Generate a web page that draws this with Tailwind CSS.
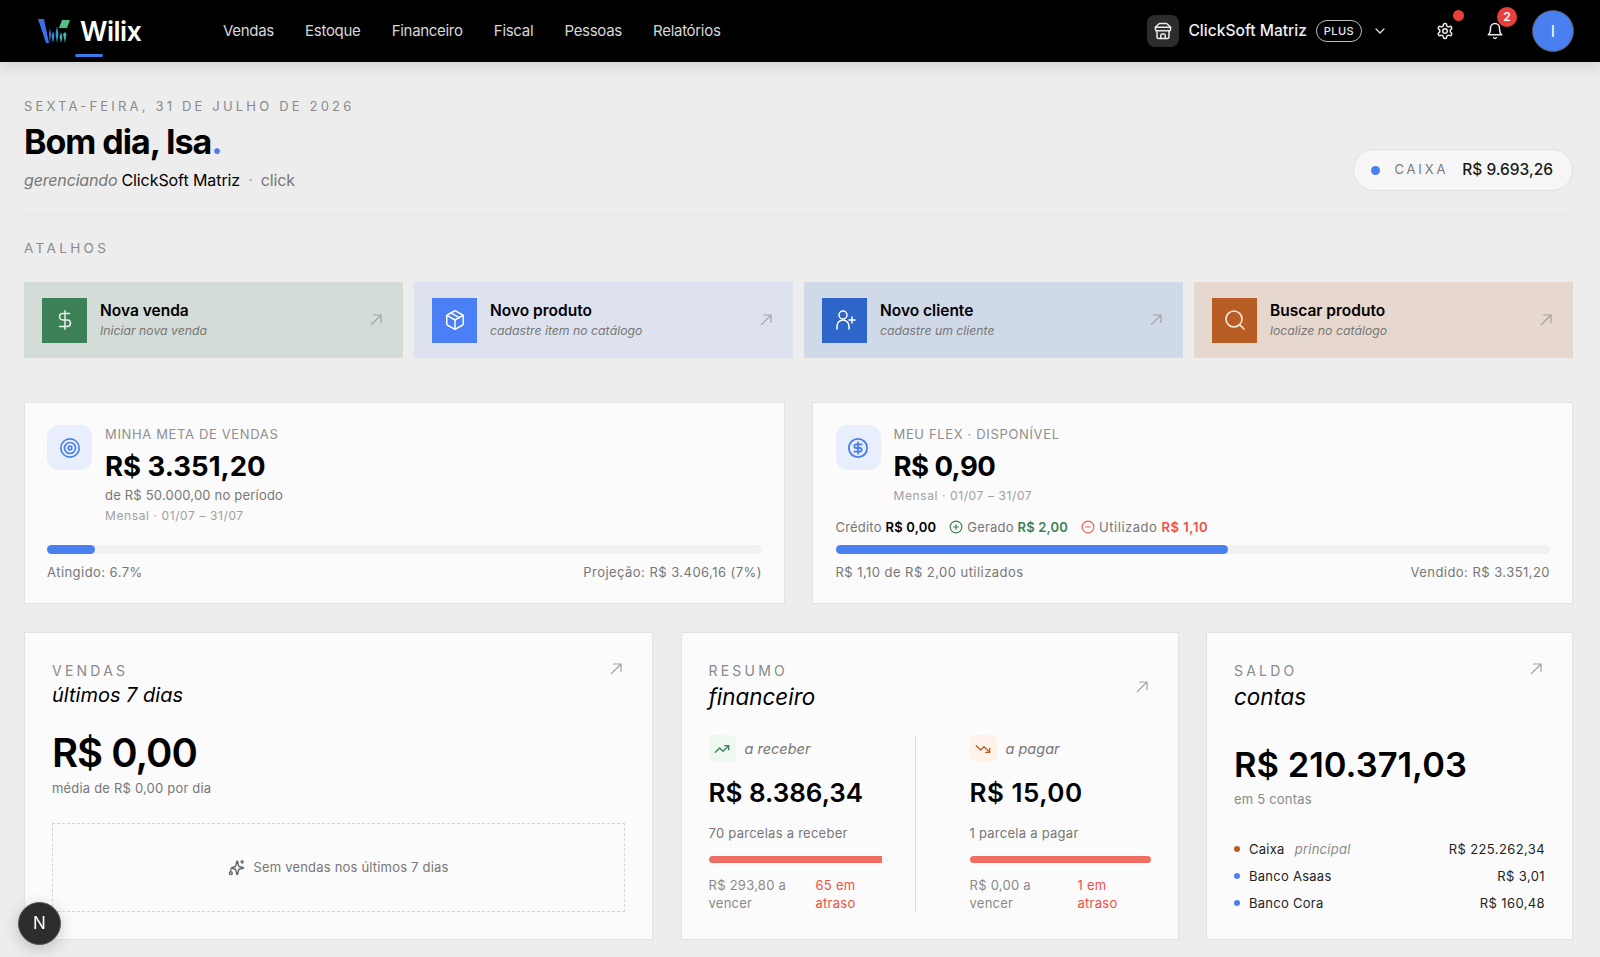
<!DOCTYPE html>
<html lang="pt-BR">

<head>
    <meta charset="UTF-8">
    <meta name="viewport" content="width=device-width, initial-scale=1.0">
    <title>Wilix</title>
    <script src="https://cdn.jsdelivr.net/npm/@tailwindcss/browser@4"></script>
</head>

<body class="bg-[#ededed] h-[957px] overflow-hidden text-black [font-family:Inter,sans-serif]">
    <!-- Top bar -->
    <header class="relative z-10 flex items-center h-[62px] bg-black pl-[38px] pr-[26px] shadow-[0_4px_16px_rgba(0,0,0,0.12)]">
        <div class="relative flex items-center h-full w-[185px]">
            <svg class="w-[32px] h-[26px]" viewBox="0 0 32 26">
                <polygon points="0,1 6,1 11,25 8,25" fill="#3b6fe8" />
                <polygon points="12,10 13,16 12,25 11,16" fill="#3b78e0" />
                <polygon points="15,13 16.5,18 15,25 13.5,18" fill="#3b86d8" />
                <polygon points="19,8 20.5,16 19,25 17.5,16" fill="#3b95cc" />
                <polygon points="23,14 24.5,19 23,25 21.5,19" fill="#3ca5b8" />
                <polygon points="27,14 28.5,16 27,25 25,16" fill="#45b3a8" />
                <polygon points="24,2 32,2 29,10 21,10" fill="#52c088" />
            </svg>
            <span class="ml-[10px] text-[27px] leading-none font-semibold tracking-[-0.02em] text-white">Wilix</span>
            <div class="absolute left-[37px] bottom-[5px] w-[28px] h-[3px] rounded-full bg-[#3b78e8]"></div>
        </div>
        <nav class="flex items-center gap-[31.2px] text-[15px] tracking-[-0.02em] text-[#d8d8d8]">
            <a>Vendas</a>
            <a>Estoque</a>
            <a>Financeiro</a>
            <a>Fiscal</a>
            <a>Pessoas</a>
            <a>Relatórios</a>
        </nav>
        <div class="ml-auto flex items-center">
            <div class="flex items-center justify-center w-[32px] h-[32px] rounded-lg bg-[#2c2c2c]">
                <svg class="w-[18px] h-[18px]" viewBox="0 0 24 24" fill="none" stroke="#ececec" stroke-width="2" stroke-linecap="round" stroke-linejoin="round">
                    <path d="m2 7 4.41-4.41A2 2 0 0 1 7.83 2h8.34a2 2 0 0 1 1.42.59L22 7" />
                    <path d="M4 12v8a2 2 0 0 0 2 2h12a2 2 0 0 0 2-2v-8" />
                    <path d="M15 22v-4a2 2 0 0 0-2-2h-2a2 2 0 0 0-2 2v4" />
                    <path d="M2 7h20" />
                    <path d="M22 7v3a2 2 0 0 1-2 2a2.7 2.7 0 0 1-1.59-.63.7.7 0 0 0-.82 0A2.7 2.7 0 0 1 16 12a2.7 2.7 0 0 1-1.59-.63.7.7 0 0 0-.82 0A2.7 2.7 0 0 1 12 12a2.7 2.7 0 0 1-1.59-.63.7.7 0 0 0-.82 0A2.7 2.7 0 0 1 8 12a2.7 2.7 0 0 1-1.59-.63.7.7 0 0 0-.82 0A2.7 2.7 0 0 1 4 12a2 2 0 0 1-2-2V7" />
                </svg>
            </div>
            <span class="ml-[9px] text-[15.6px] font-medium text-[#eeeeee]">ClickSoft Matriz</span>
            <span class="ml-[9px] flex items-center justify-center w-[46px] h-[22px] rounded-full border border-[#bdbdbd] text-[11px] font-medium tracking-[0.04em] text-[#e8e8e8]">PLUS</span>
            <svg class="ml-[10px] w-[16px] h-[16px]" viewBox="0 0 24 24" fill="none" stroke="#d8d8d8" stroke-width="2" stroke-linecap="round" stroke-linejoin="round">
                <path d="m6 9 6 6 6-6" />
            </svg>
            <div class="relative ml-[48px] w-[18px] h-[18px]">
                <svg class="w-[18px] h-[18px]" viewBox="0 0 24 24" fill="none" stroke="#ececec" stroke-width="2" stroke-linecap="round" stroke-linejoin="round">
                    <path d="M12.22 2h-.44a2 2 0 0 0-2 2v.18a2 2 0 0 1-1 1.73l-.43.25a2 2 0 0 1-2 0l-.15-.08a2 2 0 0 0-2.73.73l-.22.38a2 2 0 0 0 .73 2.73l.15.1a2 2 0 0 1 1 1.72v.51a2 2 0 0 1-1 1.74l-.15.09a2 2 0 0 0-.73 2.73l.22.38a2 2 0 0 0 2.73.73l.15-.08a2 2 0 0 1 2 0l.43.25a2 2 0 0 1 1 1.73V20a2 2 0 0 0 2 2h.44a2 2 0 0 0 2-2v-.18a2 2 0 0 1 1-1.73l.43-.25a2 2 0 0 1 2 0l.15.08a2 2 0 0 0 2.73-.73l.22-.39a2 2 0 0 0-.73-2.73l-.15-.08a2 2 0 0 1-1-1.74v-.5a2 2 0 0 1 1-1.74l.15-.09a2 2 0 0 0 .73-2.73l-.22-.38a2 2 0 0 0-2.73-.73l-.15.08a2 2 0 0 1-2 0l-.43-.25a2 2 0 0 1-1-1.73V4a2 2 0 0 0-2-2z" />
                    <circle cx="12" cy="12" r="3" />
                </svg>
                <span class="absolute -top-[12px] left-[17px] w-[11px] h-[11px] rounded-full bg-[#e83f3f]"></span>
            </div>
            <div class="relative ml-[32px] w-[18px] h-[18px]">
                <svg class="w-[18px] h-[18px]" viewBox="0 0 24 24" fill="none" stroke="#ececec" stroke-width="2" stroke-linecap="round" stroke-linejoin="round">
                    <path d="M6 8a6 6 0 0 1 12 0c0 7 3 9 3 9H3s3-2 3-9" />
                    <path d="M10.3 21a1.94 1.94 0 0 0 3.4 0" />
                </svg>
                <span class="absolute -top-[15px] left-[11px] flex items-center justify-center w-[20px] h-[20px] rounded-full bg-[#e83f3f] text-[12px] font-semibold text-white">2</span>
            </div>
            <div class="ml-[28px] flex items-center justify-center w-[42px] h-[42px] rounded-full border border-[#555] bg-[#4a7ff0] text-[16px] text-white">I</div>
        </div>
    </header>

    <main class="pl-6 pr-[27px] pt-[34px]">
        <!-- Greeting -->
        <div class="flex items-end justify-between pb-[23px] border-b border-[#e5e5e5]">
            <div>
                <p class="text-[13px] leading-[20px] tracking-[0.245em] text-[#8a8a8a]">SEXTA-FEIRA, 31 DE JULHO DE 2026</p>
                <h1 class="mt-[6px] text-[34px] leading-[40px] font-bold tracking-[-0.03em]">Bom dia, Isa<span class="text-[#4a7ff0]">.</span></h1>
                <p class="mt-[7px] flex items-center text-[16px] leading-[22px]"><em class="tracking-[-0.01em] text-[#777]">gerenciando</em><span class="ml-[4px] tracking-[-0.005em]">ClickSoft Matriz</span><span class="mx-[8px] text-[#aaa]">·</span><span class="tracking-[-0.01em] text-[#777]">click</span></p>
            </div>
            <div class="flex items-center h-[42px] pl-[17px] pr-[19px] rounded-full border border-[#e0e0e0] bg-[#f6f6f6]">
                <span class="w-[9px] h-[9px] rounded-full bg-[#4a7ff0]"></span>
                <span class="ml-[14px] text-[13px] tracking-[0.22em] text-[#7a7a7a]">CAIXA</span>
                <span class="ml-[14px] text-[15.5px] font-medium text-[#1a1a1a]">R$ 9.693,26</span>
            </div>
        </div>

        <!-- Shortcuts -->
        <p class="mt-[23px] text-[13.5px] leading-[20px] tracking-[0.25em] text-[#8a8a8a]">ATALHOS</p>
        <div class="mt-[24px] grid grid-cols-4 gap-[11px]">
            <div class="flex items-center h-[76px] pl-[18px] pr-[21px] bg-[#d3dcd6]">
                <div class="flex items-center justify-center w-[45px] h-[45px] bg-[#3c8058]">
                    <svg class="w-[22px] h-[22px]" viewBox="0 0 24 24" fill="none" stroke="#e8f2ec" stroke-width="1.6" stroke-linecap="round" stroke-linejoin="round">
                        <line x1="12" x2="12" y1="2" y2="22" />
                        <path d="M17 5H9.5a3.5 3.5 0 0 0 0 7h5a3.5 3.5 0 0 1 0 7H6" />
                    </svg>
                </div>
                <div class="ml-[13px] mt-[2px]">
                    <p class="text-[15.5px] leading-[20px] font-semibold">Nova venda</p>
                    <p class="text-[12.25px] leading-[20px] italic text-[#777]">Iniciar nova venda</p>
                </div>
                <svg class="ml-auto w-[12px] h-[12px]" viewBox="0 0 12 12" fill="none" stroke="#a3a3a3" stroke-width="1.2">
                    <path d="M1 11 11 1M3 1h8v8" />
                </svg>
            </div>
            <div class="flex items-center h-[76px] pl-[18px] pr-[21px] bg-[#dde2ee]">
                <div class="flex items-center justify-center w-[45px] h-[45px] bg-[#4a7ff5]">
                    <svg class="w-[22px] h-[22px]" viewBox="0 0 24 24" fill="none" stroke="#ffffff" stroke-width="1.6" stroke-linecap="round" stroke-linejoin="round">
                        <path d="m7.5 4.27 9 5.15" />
                        <path d="M21 8a2 2 0 0 0-1-1.73l-7-4a2 2 0 0 0-2 0l-7 4A2 2 0 0 0 3 8v8a2 2 0 0 0 1 1.73l7 4a2 2 0 0 0 2 0l7-4A2 2 0 0 0 21 16Z" />
                        <path d="m3.3 7 8.7 5 8.7-5" />
                        <path d="M12 22V12" />
                    </svg>
                </div>
                <div class="ml-[13px] mt-[2px]">
                    <p class="text-[15.5px] leading-[20px] font-semibold">Novo produto</p>
                    <p class="text-[12.25px] leading-[20px] italic text-[#777]">cadastre item no catálogo</p>
                </div>
                <svg class="ml-auto w-[12px] h-[12px]" viewBox="0 0 12 12" fill="none" stroke="#a3a3a3" stroke-width="1.2">
                    <path d="M1 11 11 1M3 1h8v8" />
                </svg>
            </div>
            <div class="flex items-center h-[76px] pl-[18px] pr-[21px] bg-[#d0d9e7]">
                <div class="flex items-center justify-center w-[45px] h-[45px] bg-[#2d66c8]">
                    <svg class="w-[24px] h-[24px]" viewBox="0 0 24 24" fill="none" stroke="#ffffff" stroke-width="1.5" stroke-linecap="round" stroke-linejoin="round">
                        <path d="M4 21v-3a6 6 0 0 1 12 0v3" />
                        <circle cx="10" cy="7" r="4" />
                        <line x1="19" x2="19" y1="9" y2="15" />
                        <line x1="22" x2="16" y1="12" y2="12" />
                    </svg>
                </div>
                <div class="ml-[13px] mt-[2px]">
                    <p class="text-[15.5px] leading-[20px] font-semibold">Novo cliente</p>
                    <p class="text-[12.25px] leading-[20px] italic text-[#777]">cadastre um cliente</p>
                </div>
                <svg class="ml-auto w-[12px] h-[12px]" viewBox="0 0 12 12" fill="none" stroke="#a3a3a3" stroke-width="1.2">
                    <path d="M1 11 11 1M3 1h8v8" />
                </svg>
            </div>
            <div class="flex items-center h-[76px] pl-[18px] pr-[21px] bg-[#e6d7cf]">
                <div class="flex items-center justify-center w-[45px] h-[45px] bg-[#b85d24]">
                    <svg class="w-[24px] h-[24px]" viewBox="0 0 24 24" fill="none" stroke="#f8e8de" stroke-width="1.6" stroke-linecap="round" stroke-linejoin="round">
                        <circle cx="11" cy="11" r="8" />
                        <path d="m21 21-4.3-4.3" />
                    </svg>
                </div>
                <div class="ml-[13px] mt-[2px]">
                    <p class="text-[15.5px] leading-[20px] font-semibold">Buscar produto</p>
                    <p class="text-[12.25px] leading-[20px] italic text-[#777]">localize no catálogo</p>
                </div>
                <svg class="ml-auto w-[12px] h-[12px]" viewBox="0 0 12 12" fill="none" stroke="#a3a3a3" stroke-width="1.2">
                    <path d="M1 11 11 1M3 1h8v8" />
                </svg>
            </div>
        </div>

        <!-- Goal and flex cards -->
        <div class="mt-[44px] grid grid-cols-2 gap-[27px]">
            <section class="h-[202px] px-[22px] pt-[22px] border border-[#e2e2e2] bg-[#fbfbfb]">
                <div class="flex">
                    <div class="flex items-center justify-center shrink-0 w-[45px] h-[45px] rounded-xl bg-[#e8eefb]">
                        <svg class="w-[22px] h-[22px]" viewBox="0 0 24 24" fill="none" stroke="#4a7ff0" stroke-width="1.8">
                            <circle cx="12" cy="12" r="10" />
                            <circle cx="12" cy="12" r="6" />
                            <circle cx="12" cy="12" r="2" />
                        </svg>
                    </div>
                    <div class="ml-[13px]">
                        <p class="text-[13px] leading-[18px] tracking-[0.05em] text-[#8f8f8f]">MINHA META DE VENDAS</p>
                        <p class="mt-[5px] text-[27.5px] leading-[36px] font-bold">R$ 3.351,20</p>
                        <p class="mt-[2px] text-[13px] leading-[18px] tracking-[0.015em] text-[#777]">de R$ 50.000,00 no período</p>
                        <p class="mt-[4px] text-[12px] leading-[16px] tracking-[0.05em] text-[#a0a0a0]">Mensal · 01/07 – 31/07</p>
                    </div>
                </div>
                <div class="mt-[21px] h-[9px] rounded-full bg-[#f1f1f1]">
                    <div class="h-full rounded-full bg-[#4a7ff0]" style="width: 6.7%"></div>
                </div>
                <div class="mt-[9px] flex justify-between text-[13px] leading-[18px] tracking-[0.035em] text-[#777]">
                    <span>Atingido: 6.7%</span>
                    <span>Projeção: R$ 3.406,16 (7%)</span>
                </div>
            </section>
            <section class="h-[202px] pl-[22.5px] pr-[22px] pt-[22px] border border-[#e2e2e2] bg-[#fbfbfb]">
                <div class="flex">
                    <div class="flex items-center justify-center shrink-0 w-[45px] h-[45px] rounded-xl bg-[#e8eefb]">
                        <svg class="w-[22px] h-[22px]" viewBox="0 0 24 24" fill="none" stroke="#4a7ff0" stroke-width="2" stroke-linecap="round" stroke-linejoin="round">
                            <circle cx="12" cy="12" r="10" />
                            <path d="M16 8h-6a2 2 0 1 0 0 4h4a2 2 0 1 1 0 4H8" />
                            <path d="M12 18V6" />
                        </svg>
                    </div>
                    <div class="ml-[13px]">
                        <p class="text-[13px] leading-[18px] tracking-[0.05em] text-[#8f8f8f]">MEU FLEX · DISPONÍVEL</p>
                        <p class="mt-[5px] text-[27.5px] leading-[36px] font-bold tracking-[-0.02em]">R$ 0,90</p>
                        <p class="mt-[4px] text-[12px] leading-[16px] tracking-[0.05em] text-[#a0a0a0]">Mensal · 01/07 – 31/07</p>
                    </div>
                </div>
                <div class="mt-[14px] flex items-center text-[13px] leading-[18px] tracking-[0.015em] text-[#777]">
                    <span>Crédito <b class="font-semibold text-black">R$ 0,00</b></span>
                    <svg class="ml-[13px] w-[14px] h-[14px]" viewBox="0 0 24 24" fill="none" stroke="#3c8058" stroke-width="2" stroke-linecap="round">
                        <circle cx="12" cy="12" r="10" />
                        <path d="M8 12h8M12 8v8" />
                    </svg>
                    <span class="ml-[4px]">Gerado <b class="font-semibold text-[#3c8058]">R$ 2,00</b></span>
                    <svg class="ml-[13px] w-[14px] h-[14px]" viewBox="0 0 24 24" fill="none" stroke="#ef5f52" stroke-width="2" stroke-linecap="round">
                        <circle cx="12" cy="12" r="10" />
                        <path d="M8 12h8" />
                    </svg>
                    <span class="ml-[4px] tracking-[0.04em]">Utilizado <b class="font-semibold text-[#ef5144]">R$ 1,10</b></span>
                </div>
                <div class="mt-[9px] h-[9px] rounded-full bg-[#f1f1f1]">
                    <div class="h-full rounded-full bg-[#4a7ff0]" style="width: 55%"></div>
                </div>
                <div class="mt-[9px] flex justify-between text-[13px] leading-[18px] tracking-[0.035em] text-[#777]">
                    <span>R$ 1,10 de R$ 2,00 utilizados</span>
                    <span>Vendido: R$ 3.351,20</span>
                </div>
            </section>
        </div>

        <!-- Bottom cards -->
        <div class="mt-[28px] grid grid-cols-[629px_498px_367px] gap-[27.5px]">
            <section class="h-[308px] px-[27px] pt-[29px] border border-[#e2e2e2] bg-[#fbfbfb]">
                <div class="flex justify-between">
                    <div>
                        <p class="text-[14px] leading-[18px] tracking-[0.23em] text-[#8a8a8a]">VENDAS</p>
                        <p class="mt-[2px] text-[20px] leading-[26px] italic">últimos 7 dias</p>
                    </div>
                    <svg class="mr-[3px] mt-[1px] w-[12px] h-[12px]" viewBox="0 0 12 12" fill="none" stroke="#a3a3a3" stroke-width="1.2">
                        <path d="M1 11 11 1M3 1h8v8" />
                    </svg>
                </div>
                <p class="mt-[21px] text-[40px] leading-[48px] font-semibold tracking-[-0.025em]">R$ 0,00</p>
                <p class="mt-[2px] text-[13px] leading-[18px] tracking-[0.015em] text-[#777]">média de R$ 0,00 por dia</p>
                <div class="mt-[26px] flex items-center justify-center h-[89px] border border-dashed border-[#d5d5d5] text-[13px] tracking-[0.015em] text-[#777]">
                    <svg class="mr-[8px] w-[17px] h-[17px]" viewBox="0 0 24 24" fill="none" stroke="#666" stroke-width="2" stroke-linecap="round" stroke-linejoin="round">
                        <path d="M11 15.5a2 2 0 0 0-1.4-1.4l-4-1.1a.5.5 0 0 1 0-1l4-1.1A2 2 0 0 0 11 9.5l1.5-6a.5.5 0 0 1 1 0l1.5 6a2 2 0 0 0 1.4 1.4l5 1.1a.5.5 0 0 1 0 1l-5 1.1a2 2 0 0 0-1.4 1.4l-1.5 6a.5.5 0 0 1-1 0z" />
                        <path d="M20 2v4" />
                        <path d="M22 4h-4" />
                        <circle cx="4" cy="20" r="2" />
                        <path d="M4 14v2" />
                    </svg>
                    Sem vendas nos últimos 7 dias
                </div>
            </section>

            <section class="h-[308px] pl-[27px] pr-[27px] pt-[29px] border border-[#e2e2e2] bg-[#fbfbfb]">
                <div class="flex items-center justify-between">
                    <div>
                        <p class="text-[14px] leading-[18px] tracking-[0.23em] text-[#8a8a8a]">RESUMO</p>
                        <p class="mt-[3px] text-[22.4px] leading-[28px] italic">financeiro</p>
                    </div>
                    <svg class="mr-[3px] w-[12px] h-[12px]" viewBox="0 0 12 12" fill="none" stroke="#a3a3a3" stroke-width="1.2">
                        <path d="M1 11 11 1M3 1h8v8" />
                    </svg>
                </div>
                <div class="mt-[24px] flex">
                    <div class="w-[179px] mr-[27px]">
                        <div class="flex items-center">
                            <div class="flex items-center justify-center w-[27px] h-[27px] rounded-md bg-[#eef7f0]">
                                <svg class="w-[16px] h-[16px]" viewBox="0 0 24 24" fill="none" stroke="#3c8058" stroke-width="2" stroke-linecap="round" stroke-linejoin="round">
                                    <polyline points="22 7 13.5 15.5 8.5 10.5 2 17" />
                                    <polyline points="16 7 22 7 22 13" />
                                </svg>
                            </div>
                            <span class="ml-[9px] text-[14.5px] italic text-[#777]">a receber</span>
                        </div>
                        <p class="mt-[14px] text-[26px] leading-[34px] font-semibold">R$ 8.386,34</p>
                        <p class="mt-[14px] text-[13px] leading-[18px] tracking-[0.02em] text-[#777]">70 parcelas a receber</p>
                        <div class="mt-[14px] h-[7px] rounded-full bg-[#f3f3f3]">
                            <div class="h-full rounded-l-full bg-[#f06f62]" style="width: 97%"></div>
                        </div>
                        <div class="mt-[13px] flex text-[13px] leading-[18px] tracking-[0.02em]">
                            <span class="w-[107px] pr-[10px] text-[#8a8a8a]">R$ 293,80 a vencer</span>
                            <span class="w-[60px] text-[#ef5144]">65 em atraso</span>
                        </div>
                    </div>
                    <div class="flex-1 border-l border-[#dddddd] pl-[54px]">
                        <div class="flex items-center">
                            <div class="flex items-center justify-center w-[27px] h-[27px] rounded-md bg-[#fdf3ea]">
                                <svg class="w-[16px] h-[16px]" viewBox="0 0 24 24" fill="none" stroke="#b85d24" stroke-width="2" stroke-linecap="round" stroke-linejoin="round">
                                    <polyline points="22 17 13.5 8.5 8.5 13.5 2 7" />
                                    <polyline points="16 17 22 17 22 11" />
                                </svg>
                            </div>
                            <span class="ml-[9px] text-[14.5px] italic text-[#777]">a pagar</span>
                        </div>
                        <p class="mt-[14px] text-[26px] leading-[34px] font-semibold tracking-[0.02em]">R$ 15,00</p>
                        <p class="mt-[14px] text-[13px] leading-[18px] tracking-[0.02em] text-[#777]">1 parcela a pagar</p>
                        <div class="mt-[14px] h-[7px] rounded-full bg-[#f06f62]"></div>
                        <div class="mt-[13px] flex text-[13px] leading-[18px] tracking-[0.02em]">
                            <span class="w-[108px] pr-[10px] text-[#8a8a8a]">R$ 0,00 a vencer</span>
                            <span class="w-[50px] text-[#ef5144]">1 em atraso</span>
                        </div>
                    </div>
                </div>
            </section>

            <section class="h-[308px] pl-[27px] pr-[27px] pt-[29px] border border-[#e2e2e2] bg-[#fbfbfb]">
                <div class="flex justify-between">
                    <div>
                        <p class="text-[14px] leading-[18px] tracking-[0.23em] text-[#8a8a8a]">SALDO</p>
                        <p class="mt-[3px] text-[22.4px] leading-[28px] italic">contas</p>
                    </div>
                    <svg class="mr-[3px] mt-[1px] w-[12px] h-[12px]" viewBox="0 0 12 12" fill="none" stroke="#a3a3a3" stroke-width="1.2">
                        <path d="M1 11 11 1M3 1h8v8" />
                    </svg>
                </div>
                <p class="mt-[32px] text-[34.5px] leading-[44px] font-semibold">R$ 210.371,03</p>
                <p class="mt-[3px] text-[13px] leading-[18px] tracking-[0.015em] text-[#8a8a8a]">em 5 contas</p>
                <div class="mt-[32px] flex flex-col gap-[9px] text-[13px] leading-[18px] tracking-[0.02em] text-[#1f1f1f]">
                    <div class="flex items-center">
                        <span class="w-[6px] h-[6px] rounded-full bg-[#b85d24]"></span>
                        <span class="ml-[9px]">Caixa</span>
                        <span class="ml-[10px] italic text-[#8a8a8a]">principal</span>
                        <span class="ml-auto tracking-[0.03em]">R$ 225.262,34</span>
                    </div>
                    <div class="flex items-center">
                        <span class="w-[6px] h-[6px] rounded-full bg-[#4a7ff0]"></span>
                        <span class="ml-[9px]">Banco Asaas</span>
                        <span class="ml-auto tracking-[0.03em]">R$ 3,01</span>
                    </div>
                    <div class="flex items-center">
                        <span class="w-[6px] h-[6px] rounded-full bg-[#4a7ff0]"></span>
                        <span class="ml-[9px]">Banco Cora</span>
                        <span class="ml-auto tracking-[0.03em]">R$ 160,48</span>
                    </div>
                </div>
            </section>
        </div>
    </main>

    <!-- Dev indicator -->
    <div class="fixed left-[18px] top-[902px] z-20 flex items-center justify-center w-[43px] h-[43px] rounded-full border border-[#555] bg-[#2d2d2d] text-[17px] text-white shadow-[0_4px_16px_rgba(0,0,0,0.2)]">N</div>
</body>

</html>
